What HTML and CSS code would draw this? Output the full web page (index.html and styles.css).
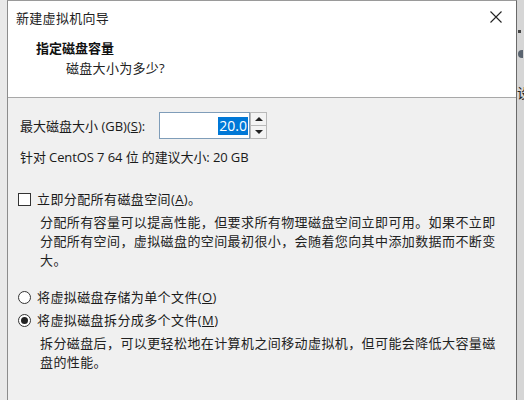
FILE: index.html
```html
<!DOCTYPE html>
<html lang="zh-CN">
<head>
    <meta charset="UTF-8">
    <title>新建虚拟机向导</title>
    <link rel="stylesheet" href="styles.css">
</head>
<body>
    <div class="desk-left"></div>

    <div class="dialog">
        <div class="top">
            <div class="titlebar">
                <span class="title">新建虚拟机向导</span>
                <svg class="close" width="12" height="12" viewBox="0 0 12 12">
                    <path d="M0.5 0.5 L11.5 11.5 M11.5 0.5 L0.5 11.5" stroke="#222" stroke-width="1.1" fill="none"/>
                </svg>
            </div>
            <div class="heading">指定磁盘容量</div>
            <div class="subheading">磁盘大小为多少?</div>
        </div>

        <div class="body">
            <div class="size-row">
                <label for="size">最大磁盘大小 (GB)(<u>S</u>):</label>
                <div class="spin">
                    <div class="spin-input"><span class="sel">20.0</span></div>
                    <div class="spin-btns">
                        <div class="spin-btn"><span class="tri up"></span></div>
                        <div class="spin-btn"><span class="tri down"></span></div>
                    </div>
                </div>
            </div>
            <p class="hint">针对 CentOS 7 64 位 的建议大小: 20 GB</p>

            <div class="option check-opt">
                <span class="checkbox"></span>
                <span>立即分配所有磁盘空间(<u>A</u>)。</span>
            </div>
            <p class="desc">分配所有容量可以提高性能，但要求所有物理磁盘空间立即可用。如果不立即分配所有空间，虚拟磁盘的空间最初很小，会随着您向其中添加数据而不断变大。</p>

            <div class="option radio-one">
                <span class="radio"></span>
                <span>将虚拟磁盘存储为单个文件(<u>O</u>)</span>
            </div>
            <div class="option radio-two">
                <span class="radio checked"></span>
                <span>将虚拟磁盘拆分成多个文件(<u>M</u>)</span>
            </div>
            <p class="desc">拆分磁盘后，可以更轻松地在计算机之间移动虚拟机，但可能会降低大容量磁盘的性能。</p>
        </div>
    </div>

    <div class="desk-right">
        <span class="bit sq"></span>
        <span class="bit arrow"></span>
        <span class="peek">设</span>
    </div>
</body>
</html>
```

FILE: styles.css
```css
body {
    margin: 0;
    width: 524px;
    height: 400px;
    overflow: hidden;
    display: flex;
    background: #dcdcdc;
    font-family: "Open Sans", "Noto Sans CJK SC", sans-serif;
    font-size: 13px;
    color: #1a1a1a;
}

.desk-left {
    width: 7px;
    background: #e9e9e9;
}

.dialog {
    width: 508px;
    height: 400px;
    border-left: 1px solid #8c8c8c;
    border-right: 1px solid #6a6a6a;
    border-top: 1px solid #9a9a9a;
    background: #f0f0f0;
    display: flex;
    flex-direction: column;
}

.top {
    background: #ffffff;
    height: 96px;
    border-bottom: 1px solid #a8a8a8;
}

.titlebar {
    height: 32px;
    display: flex;
    align-items: center;
    justify-content: space-between;
    padding: 0 14px 0 8px;
}

.title {
    font-size: 13px;
    letter-spacing: 0.3px;
    color: #222;
}

.close {
    display: block;
}

.heading {
    font-weight: bold;
    font-size: 13px;
    padding-left: 28px;
    margin-top: 5px;
    line-height: 20px;
    color: #111;
}

.subheading {
    padding-left: 58px;
    line-height: 20px;
    letter-spacing: 0.3px;
    color: #222;
}

.body {
    padding: 14px 0 0 10px;
}

.size-row {
    display: flex;
    align-items: center;
    height: 27px;
    padding-left: 2px;
}

.size-row label {
    width: 139px;
}

.spin {
    display: flex;
    height: 27px;
}

.spin-input {
    width: 91px;
    box-sizing: border-box;
    border: 1px solid #7f9db9;
    background: #fff;
    display: flex;
    align-items: center;
    justify-content: flex-end;
    padding-right: 1px;
}

.sel {
    background: #0078d7;
    color: #fff;
    font-size: 14px;
    line-height: 18px;
    padding: 0 1px;
}

.spin-btns {
    display: flex;
    flex-direction: column;
    width: 17px;
}

.spin-btn {
    flex: 1;
    background: #f3f3f3;
    border: 1px solid #b9b9b9;
    display: flex;
    align-items: center;
    justify-content: center;
}

.spin-btn + .spin-btn {
    border-top: none;
}

.tri {
    width: 0;
    height: 0;
    border-left: 4px solid transparent;
    border-right: 4px solid transparent;
}

.tri.up {
    border-bottom: 4px solid #222;
}

.tri.down {
    border-top: 4px solid #222;
}

.hint {
    margin: 8px 0 0 2px;
    line-height: 20px;
    letter-spacing: -0.1px;
}

.option {
    display: flex;
    align-items: center;
    line-height: 20px;
    letter-spacing: 0.4px;
}

.check-opt {
    margin-top: 22px;
}

.checkbox {
    width: 11px;
    height: 11px;
    border: 1px solid #333;
    background: #fff;
    margin-right: 6px;
}

.desc {
    margin: 4px 12px 0 22px;
    line-height: 19px;
    font-size: 13px;
    letter-spacing: 0.4px;
    color: #222;
}

.radio-one {
    margin-top: 17px;
}

.radio-two {
    margin-top: 3px;
}

.radio {
    width: 11px;
    height: 11px;
    border: 1px solid #333;
    border-radius: 50%;
    background: #fff;
    margin-right: 6px;
    position: relative;
}

.radio.checked::after {
    content: "";
    position: absolute;
    left: 2px;
    top: 2px;
    width: 7px;
    height: 7px;
    border-radius: 50%;
    background: #222;
}

.desk-right {
    flex: 1;
    background: #d6d6d6;
    position: relative;
    overflow: hidden;
}

.bit {
    position: absolute;
    left: 1px;
    background: #444;
}

.bit.sq {
    top: 30px;
    width: 3px;
    height: 3px;
}

.bit.arrow {
    top: 50px;
    width: 5px;
    height: 8px;
    border-radius: 4px 0 0 4px;
    background: #5a6470;
}

.peek {
    position: absolute;
    top: 82px;
    left: 0;
    font-size: 14px;
    color: #222;
}
```
